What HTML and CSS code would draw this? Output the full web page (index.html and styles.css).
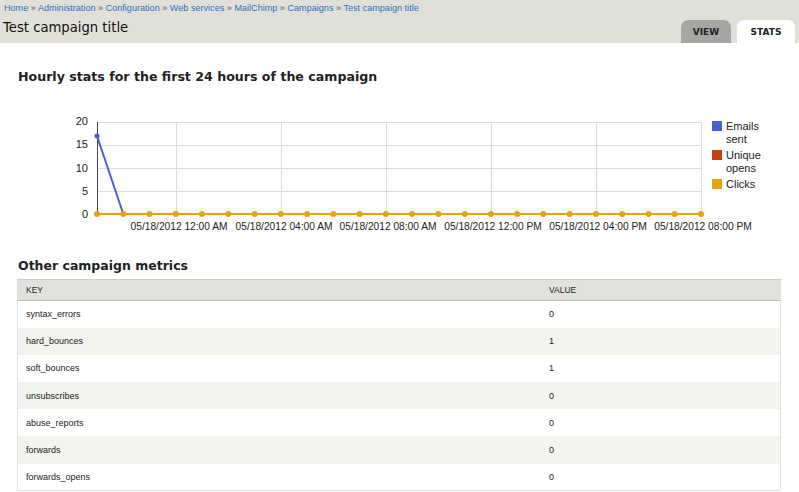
FILE: index.html
```html
<!DOCTYPE html>
<html>
<head>
<meta charset="utf-8">
<link rel="stylesheet" href="styles.css">
</head>
<body>
<div class="header">
  <div class="breadcrumb"><a href="#">Home</a> » <a href="#">Administration</a> » <a href="#">Configuration</a> » <a href="#">Web services</a> » <a href="#">MailChimp</a> » <a href="#">Campaigns</a> » <a href="#">Test campaign title</a></div>
  <div class="title-row">
    <h1 class="page-title">Test campaign title</h1>
    <ul class="tabs">
      <li class="tab">VIEW</li>
      <li class="tab active">STATS</li>
    </ul>
  </div>
</div>
<div class="content">
  <h2 class="section-title">Hourly stats for the first 24 hours of the campaign</h2>
  <svg class="chart" width="799" height="126" viewBox="0 110 799 126" xmlns="http://www.w3.org/2000/svg">
    <g stroke="#dcdcdc" stroke-width="1">
      <line x1="97" y1="122.5" x2="701" y2="122.5"/>
      <line x1="97" y1="145.5" x2="701" y2="145.5"/>
      <line x1="97" y1="168.5" x2="701" y2="168.5"/>
      <line x1="97" y1="191.5" x2="701" y2="191.5"/>
      <line x1="176.5" y1="122" x2="176.5" y2="214"/>
      <line x1="281.5" y1="122" x2="281.5" y2="214"/>
      <line x1="386.5" y1="122" x2="386.5" y2="214"/>
      <line x1="491.5" y1="122" x2="491.5" y2="214"/>
      <line x1="596.5" y1="122" x2="596.5" y2="214"/>
      <line x1="701.5" y1="122" x2="701.5" y2="214"/>
    </g>
    <line x1="97.5" y1="122" x2="97.5" y2="215" stroke="#444" stroke-width="1"/>
    <g class="ylab" text-anchor="end">
      <text x="88" y="125">20</text>
      <text x="88" y="148">15</text>
      <text x="88" y="172">10</text>
      <text x="88" y="195">5</text>
      <text x="88" y="218">0</text>
    </g>
    <g class="xlab" text-anchor="middle">
      <text x="179" y="230">05/18/2012 12:00 AM</text>
      <text x="284" y="230">05/18/2012 04:00 AM</text>
      <text x="388" y="230">05/18/2012 08:00 AM</text>
      <text x="493" y="230">05/18/2012 12:00 PM</text>
      <text x="598" y="230">05/18/2012 04:00 PM</text>
      <text x="703" y="230">05/18/2012 08:00 PM</text>
    </g>
    <polyline points="97,136 123.3,214" fill="none" stroke="#4a5fd4" stroke-width="2"/>
    <circle cx="97" cy="136" r="2.5" fill="#4a5fd4"/>
    <line x1="97" y1="214" x2="701" y2="214" stroke="#e8a20c" stroke-width="2"/>
    <g fill="#e8a20c">
      <circle cx="97" cy="214" r="3"/><circle cx="123.3" cy="214" r="3"/><circle cx="149.5" cy="214" r="3"/><circle cx="175.8" cy="214" r="3"/><circle cx="202" cy="214" r="3"/><circle cx="228.3" cy="214" r="3"/><circle cx="254.6" cy="214" r="3"/><circle cx="280.8" cy="214" r="3"/><circle cx="307.1" cy="214" r="3"/><circle cx="333.3" cy="214" r="3"/><circle cx="359.6" cy="214" r="3"/><circle cx="385.9" cy="214" r="3"/><circle cx="412.1" cy="214" r="3"/><circle cx="438.4" cy="214" r="3"/><circle cx="464.7" cy="214" r="3"/><circle cx="490.9" cy="214" r="3"/><circle cx="517.2" cy="214" r="3"/><circle cx="543.4" cy="214" r="3"/><circle cx="569.7" cy="214" r="3"/><circle cx="596" cy="214" r="3"/><circle cx="622.2" cy="214" r="3"/><circle cx="648.5" cy="214" r="3"/><circle cx="674.7" cy="214" r="3"/><circle cx="701" cy="214" r="3"/>
    </g>
    <g class="legend">
      <rect x="712" y="121" width="10" height="10" fill="#4a5fd4"/>
      <text x="726" y="130">Emails</text>
      <text x="726" y="143">sent</text>
      <rect x="712" y="150" width="10" height="10" fill="#c1440e"/>
      <text x="726" y="159">Unique</text>
      <text x="726" y="172">opens</text>
      <rect x="712" y="179" width="10" height="10" fill="#e8a20c"/>
      <text x="726" y="188">Clicks</text>
    </g>
  </svg>
  <h2 class="section-title second">Other campaign metrics</h2>
  <table class="metrics">
    <thead>
      <tr><th class="col-key">KEY</th><th>VALUE</th></tr>
    </thead>
    <tbody>
      <tr><td>syntax_errors</td><td>0</td></tr>
      <tr class="even"><td>hard_bounces</td><td>1</td></tr>
      <tr><td>soft_bounces</td><td>1</td></tr>
      <tr class="even"><td>unsubscribes</td><td>0</td></tr>
      <tr><td>abuse_reports</td><td>0</td></tr>
      <tr class="even"><td>forwards</td><td>0</td></tr>
      <tr><td>forwards_opens</td><td>0</td></tr>
    </tbody>
  </table>
</div>
</body>
</html>
```
FILE: styles.css
```css
html, body {
  margin: 0;
  padding: 0;
  background: #fff;
  font-family: "DejaVu Sans", Verdana, sans-serif;
  color: #333;
}
.header {
  background: #e0e0d8;
  height: 43px;
  box-sizing: border-box;
  padding: 3px 4px 0 3px;
}
.breadcrumb {
  font-family: "Liberation Sans", Arial, sans-serif;
  font-size: 9.1px;
  line-height: 11px;
  color: #555;
  padding-left: 1px;
}
.breadcrumb a {
  color: #2c6fc1;
  text-decoration: none;
}
.title-row {
  display: flex;
  justify-content: space-between;
  align-items: flex-end;
  height: 29px;
}
.page-title {
  margin: 0;
  font-size: 13.2px;
  font-weight: normal;
  color: #111;
  line-height: 18px;
  align-self: flex-start;
  padding-top: 5px;
}
.tabs {
  list-style: none;
  margin: 0;
  padding: 0;
  display: flex;
  gap: 6px;
}
.tab {
  height: 23px;
  box-sizing: border-box;
  width: 50px;
  text-align: center;
  background: #a6a7a2;
  border-radius: 7px 7px 0 0;
  font-size: 9px;
  font-weight: bold;
  line-height: 24px;
  color: #222;
}
.tab.active {
  background: #fff;
  width: 58px;
}
.content {
  padding: 0 18px 0 17px;
}
.section-title {
  margin: 0;
  font-size: 12.6px;
  font-weight: bold;
  color: #222;
  line-height: 16px;
  padding: 26px 0 0 1px;
}
.section-title.second {
  padding-top: 22px;
  font-size: 12.5px;
}
.chart {
  display: block;
  margin: 25px 0 0 -17px;
}
.chart text {
  font-family: "Liberation Sans", Arial, sans-serif;
  font-size: 11px;
  fill: #222;
}
.chart .xlab text {
  font-size: 10.2px;
}
.metrics {
  margin-top: 5px;
  width: 764px;
  border-collapse: collapse;
  border: 1px solid #e2e2e2;
  border-top: none;
  font-family: "Liberation Sans", Arial, sans-serif;
  font-size: 9px;
  color: #222;
}
.metrics th {
  background: #e1e2dc;
  border-top: 1px solid #cfd0ca;
  border-bottom: 1px solid #bebfb9;
  text-align: left;
  font-weight: normal;
  height: 20px;
  padding: 0 0 0 8px;
  font-size: 8.5px;
}
.metrics th.col-key {
  width: 515px;
}
.metrics td {
  height: 27.2px;
  box-sizing: border-box;
  padding: 0 0 0 8px;
}
.metrics tr.even td {
  background: #f3f4ee;
}
```
